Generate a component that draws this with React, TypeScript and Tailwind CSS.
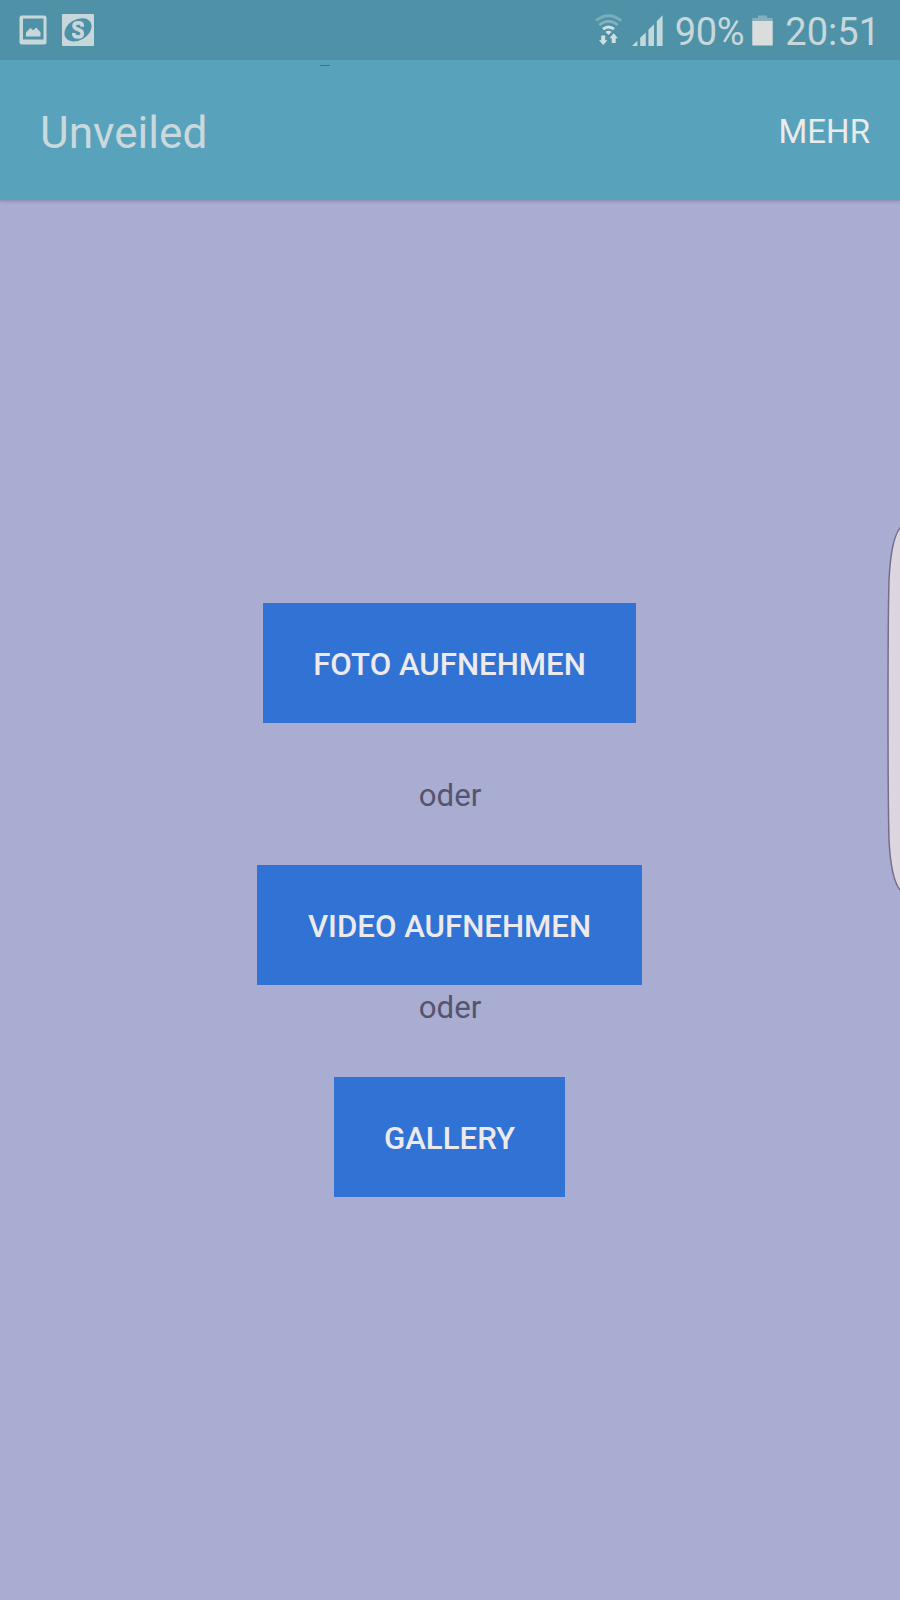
import type { ReactNode } from "react";

function PictureIcon() {
  return (
    <svg className="h-[30px] w-7" viewBox="0 0 28 30" fill="#c8d8da">
      <path
        fillRule="evenodd"
        d="M3 0.5H25A2.5 2.5 0 0 1 27.5 3V27A2.5 2.5 0 0 1 25 29.500H3A2.500 2.500 0 0 1 .5 27V3A2.500 2.500 0 0 1 3 .5ZM4 3.500V24.500H24.500V3.500Z"
      />
      <path d="M7 21.500V17.500L11.300 13L14.200 15.300L17.200 12.500L21.500 17.200V21.500Z" />
    </svg>
  );
}

function SkobblerIcon() {
  return (
    <svg className="size-8" viewBox="0 0 32 32">
      <rect width="32" height="32" rx="1" fill="#c8d8da" />
      <ellipse cx="16" cy="15.800" rx="14.600" ry="10.300" transform="rotate(-32 16 15.800)" fill="#4f92a8" />
      <path
        d="M20.200 12.800V11.500C20.200 9.400 18.600 8.900 16.300 8.900C13.600 8.900 12 10 12 12C12 14 13.400 14.600 16.200 15.500C19.200 16.400 20.300 17.400 20.300 19.500C20.300 21.900 18.700 23 15.900 23C13.200 23 11.800 22 11.800 19.800V18.900"
        fill="none"
        stroke="#c8d8da"
        strokeWidth="3.600"
      />
    </svg>
  );
}

function WifiIcon() {
  return (
    <svg className="h-8 w-7" viewBox="0 0 28 32" fill="none">
      <path d="M1 6.700Q13.500 -3.200 26.200 6.700" stroke="#78adbd" strokeWidth="2.800" />
      <path d="M4.200 11Q13.500 3.800 22.800 11" stroke="#82b3c1" strokeWidth="2.800" />
      <path d="M8 15.200Q13.500 10.800 19 15.200" stroke="#d0dfe1" strokeWidth="3" />
      <path d="M10.500 18Q13.500 15.500 16.700 18L13.500 21Z" fill="#d0dfe1" />
      <path
        d="M6.200 21.500H10.200V26.200H12.500L8.200 31L4 26.200H6.200ZM16.700 29V24.200H14.500L18.700 19.300L22.900 24.200H20.700V29Z"
        fill="#d0dfe1"
      />
    </svg>
  );
}

function SignalIcon() {
  return (
    <svg className="h-[31px] w-8" viewBox="0 0 32 31" fill="#c3d8db">
      <path d="M0 31L5.400 25.800V31ZM8.200 22.800L13.800 17.500V31H8.200ZM16.400 14.800L22 9.300V31H16.400ZM24.800 6.300L30.600 .2V31H24.800Z" />
    </svg>
  );
}

function BatteryIcon() {
  return (
    <svg className="h-[31px] w-[21px]" viewBox="0 0 21 31">
      <path d="M6 0.500H15V3H20.700V7H.3V3H6Z" fill="#82b1bd" />
      <path d="M.3 6H20.700V30.500H.3Z" fill="#d9dedd" />
    </svg>
  );
}

function ActionButton({ children, className }: { children: ReactNode; className: string }) {
  return (
    <button
      className={`${className} flex h-[120px] shrink-0 items-center justify-center bg-[#3073d4] pt-1 text-[31.2px] leading-10 font-medium whitespace-nowrap text-[#eeeaec]`}
    >
      {children}
    </button>
  );
}

export default function App() {
  return (
    <div className="relative flex h-[1600px] w-[900px] flex-col overflow-hidden bg-[#a9add1] font-['Roboto',sans-serif]">
      <div className="flex h-[60px] shrink-0 items-center justify-between bg-[#4f92a8] pr-5 pl-[19px] text-[#c8d8da]">
        <div className="flex items-center gap-[15px]">
          <PictureIcon />
          <SkobblerIcon />
        </div>
        <div className="flex items-center">
          <WifiIcon />
          <div className="ml-[9px]">
            <SignalIcon />
          </div>
          <span className="ml-[11px] pt-1 text-[38px] leading-none tracking-[-0.3px]">90%</span>
          <div className="ml-2">
            <BatteryIcon />
          </div>
          <span className="ml-3 pt-1 text-[38px] leading-none">20:51</span>
        </div>
      </div>
      <header className="flex h-[140px] shrink-0 items-center justify-between bg-[#58a2bb] pr-[30px] pl-10 shadow-[0_1px_0_#8d94b6,0_2px_3px_rgba(90,70,120,0.25)]">
        <h1 className="pt-1.5 text-[44.2px] leading-[44px] text-[#c9d9dd]">Unveiled</h1>
        <button className="pt-[3px] text-[33px] leading-none text-[#ebebeb]">MEHR</button>
      </header>
      <main className="flex flex-1 flex-col items-center pt-[403px] text-[31.2px] text-[#55546f]">
        <ActionButton className="mr-px w-[373px]">FOTO AUFNEHMEN</ActionButton>
        <p className="mt-[53px] leading-10">oder</p>
        <ActionButton className="mt-[49px] mr-px w-[384.5px]">VIDEO AUFNEHMEN</ActionButton>
        <p className="mt-[3px] leading-10">oder</p>
        <ActionButton className="mt-[49px] mr-px w-[231px]">GALLERY</ActionButton>
      </main>
      <div className="absolute top-[65px] left-[320px] h-px w-2.5 bg-[#347891]" />
      <svg className="absolute top-[520px] right-0 h-[380px] w-4" viewBox="0 0 16 380">
        <path
          d="M17 7C10 14 6.500 30 5 60C4.200 90 4 130 4 189C4 240 4.200 290 5 320C6.500 349 10 364 17 371"
          fill="#ddd6df"
          stroke="#746f89"
          strokeWidth="1.500"
        />
      </svg>
    </div>
  );
}
